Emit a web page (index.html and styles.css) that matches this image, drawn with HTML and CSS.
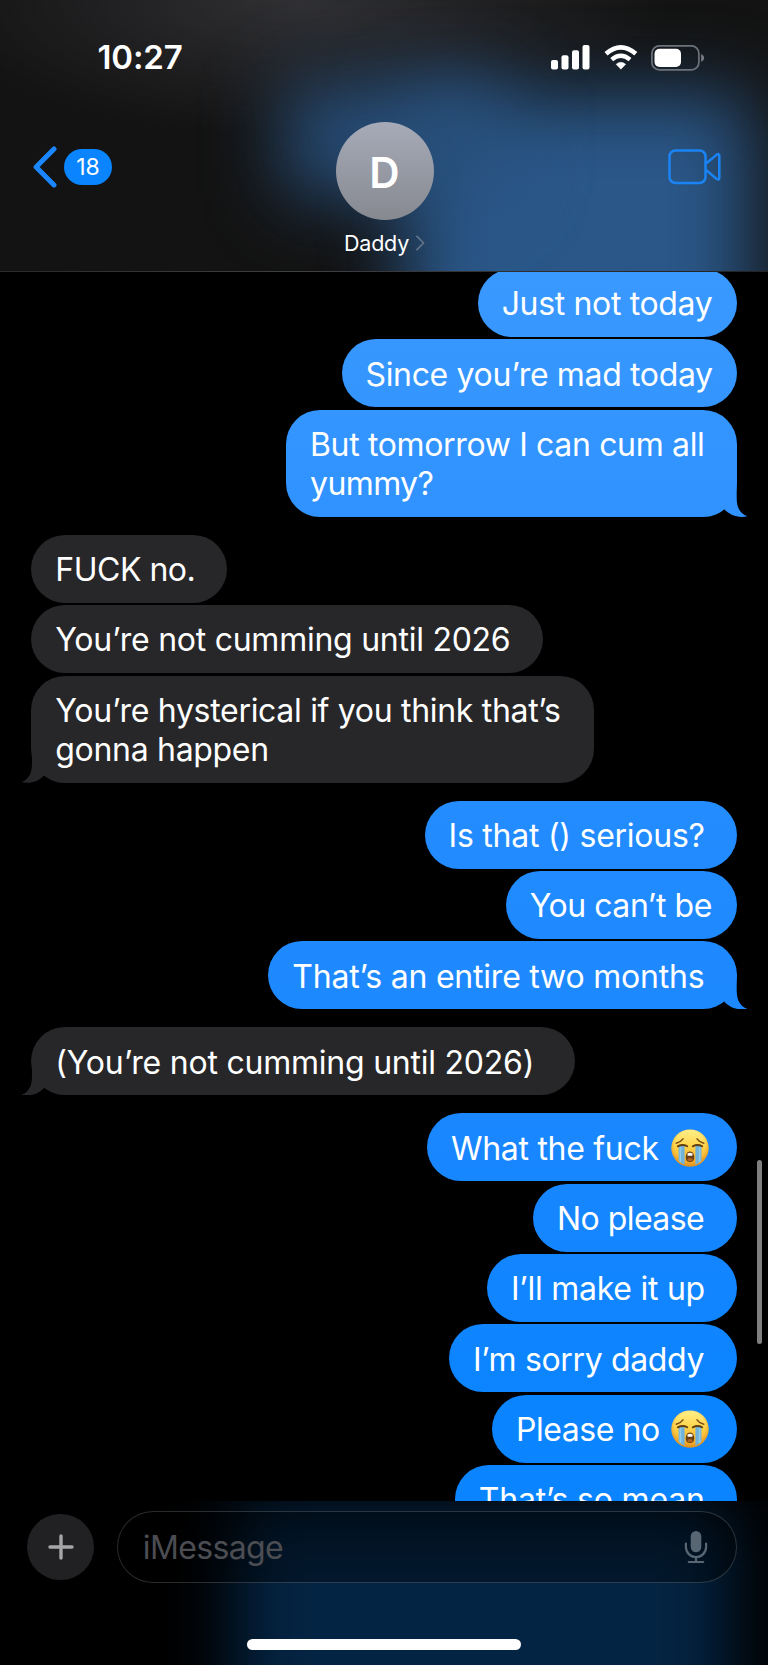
FILE: index.html
```
<!DOCTYPE html>
<html lang="en">
<head>
<meta charset="utf-8">
<title>Messages</title>
<link rel="stylesheet" href="styles.css">
</head>
<body>
<svg class="defs" width="0" height="0" aria-hidden="true">
  <defs>
    <linearGradient id="face" x1="0" y1="0" x2="0" y2="1"><stop offset="0" stop-color="#fff08a"/><stop offset=".45" stop-color="#ffd54a"/><stop offset="1" stop-color="#ef9d22"/></linearGradient>
    <radialGradient id="rim" cx=".5" cy=".45" r=".55"><stop offset=".75" stop-color="#e8a125" stop-opacity="0"/><stop offset="1" stop-color="#d98a1c" stop-opacity=".8"/></radialGradient>
    <symbol id="cry" viewBox="0 0 38 38">
      <circle cx="19" cy="19" r="18.6" fill="url(#face)"/>
      <circle cx="19" cy="19" r="18.6" fill="url(#rim)"/>
      <path d="M7.600 17h6v18.800q-3.600-1.600-6-4z M24.400 17h6v14.800q-2.400 2.400-6 4z" fill="#6fb3dc"/>
      <path d="M9.400 18v15 M28.600 18v15" stroke="#93cbe8" stroke-width="1.500" fill="none"/>
      <path d="M5.200 14.200q4.500-1 6.800-4.400 M32.800 14.200q-4.500-1-6.800-4.400" stroke="#7c4a12" stroke-width="1.500" stroke-linecap="round" fill="none"/>
      <path d="M6.800 17.300q4.800-2.700 9.400 0 M21.800 17.300q4.800-2.700 9.400 0" stroke="#65400f" stroke-width="1.900" stroke-linecap="round" fill="none"/>
      <path d="M19 22.500c3 0 4.200 3 4.200 6.200 0 2.700-1.700 4.300-4.200 4.300s-4.200-1.600-4.200-4.300c0-3.200 1.200-6.200 4.200-6.200z" fill="#6a3f12"/>
      <path d="M16.300 24.800q2.700-2.200 5.400 0l-.4 1.900h-4.600z" fill="#fff"/>
      <ellipse cx="19" cy="30.600" rx="2.700" ry="1.700" fill="#b8661f"/>
    </symbol>
  </defs>
</svg>

<header class="top">
  <div class="status">
    <span class="clock">10:27</span>
    <div class="indicators">
      <svg class="signal" width="39" height="25" viewBox="0 0 39 25" fill="#fff"><rect x="0" y="15" width="7" height="9.500" rx="2"/><rect x="10.500" y="10.300" width="7" height="14.200" rx="2"/><rect x="21" y="5.200" width="7" height="19.300" rx="2"/><rect x="31.500" y="0" width="7" height="24.500" rx="2"/></svg>
      <svg class="wifi" width="34" height="25" viewBox="0 0 34 25" fill="none" stroke="#fff"><path d="M2 8.800Q16.800-4 31.800 8.800" stroke-width="4.600"/><path d="M7.700 14.600Q16.800 6.900 26 14.600" stroke-width="4.400"/><path d="M16.900 24.200l-4.800-4.900q4.800-3.900 9.600 0z" fill="#fff" stroke-width=".5" stroke-linejoin="round"/></svg>
      <svg class="battery" width="54" height="26" viewBox="0 0 54 26"><rect x=".9" y=".9" width="47" height="24" rx="7.500" fill="none" stroke="#6d737b" stroke-width="1.700"/><rect x="3.500" y="3.700" width="26.500" height="18.200" rx="5" fill="#fff"/><path d="M50.200 9q3 1.300 3 4t-3 4z" fill="#7b7f85"/></svg>
    </div>
  </div>
  <nav class="bar">
    <div class="back">
      <svg width="26" height="42" viewBox="0 0 26 42" fill="none" stroke="#1a86ff" stroke-width="5" stroke-linecap="round" stroke-linejoin="round"><path d="M22 3L4.100 21l17.900 17.900"/></svg>
      <span class="badge">18</span>
    </div>
    <div class="contact">
      <div class="avatar">D</div>
      <div class="name"><span>Daddy</span><svg width="9" height="16" viewBox="0 0 9 16" fill="none" stroke="#62738a" stroke-width="1.700" stroke-linecap="round" stroke-linejoin="round"><path d="M1 1.300L7.600 8 1 14.700"/></svg></div>
    </div>
    <svg class="video" width="54" height="36" viewBox="0 0 54 36" fill="none" stroke="#1b84f5" stroke-width="2.500" stroke-linejoin="round"><rect x="1.500" y="1.500" width="36" height="32.500" rx="6"/><path d="M38 14.500L48.800 5.600Q51 4.200 51.300 6.500v22.500Q51 31.500 48.800 30L38 21"/></svg>
  </nav>
</header>

<main class="thread">
  <section class="group sent">
    <p class="bubble m1">Just not today</p>
    <p class="bubble m2">Since you’re mad today</p>
    <p class="bubble m3 tail">But tomorrow I can cum all<br><span class="tight">yummy?</span></p>
  </section>
  <section class="group received">
    <p class="bubble m4">FUCK no.</p>
    <p class="bubble m5">You’re not cumming until 2026</p>
    <p class="bubble m6 tail">You’re hysterical if you think that’s<br>gonna happen</p>
  </section>
  <section class="group sent">
    <p class="bubble m7">Is that () serious?</p>
    <p class="bubble m8">You can’t be</p>
    <p class="bubble m9 tail">That’s an entire two months</p>
  </section>
  <section class="group received">
    <p class="bubble m10 tail">(You’re not cumming until 2026)</p>
  </section>
  <section class="group sent">
    <p class="bubble m11"><span>What the fuck</span><svg class="emoji" role="img" aria-label="😭"><use href="#cry"/></svg></p>
    <p class="bubble m12">No please</p>
    <p class="bubble m13">I’ll make it up</p>
    <p class="bubble m14">I’m sorry daddy</p>
    <p class="bubble m15"><span>Please no</span><svg class="emoji" role="img" aria-label="😭"><use href="#cry"/></svg></p>
    <p class="bubble m16">That’s so mean</p>
  </section>
  <div class="scrollbar"></div>
</main>

<footer class="composer">
  <div class="row">
    <div class="plus"><svg width="26" height="26" viewBox="0 0 26 26" stroke="#a6a6a8" stroke-width="3.400" stroke-linecap="round"><path d="M13 2v22M2 13h22"/></svg></div>
    <div class="field">
      <span>iMessage</span>
      <svg width="24" height="34" viewBox="0 0 24 34" fill="none" stroke="#586674" stroke-width="2.200" stroke-linecap="round"><rect x="6.700" y="1" width="10.600" height="21.300" rx="5.300" fill="#586674" stroke="none"/><path d="M1.900 13.500v3.500a10.100 10.100 0 0 0 20.200 0v-3.500M12 27.500v4.500M4.800 32h14.400"/></svg>
    </div>
  </div>
  <div class="home"></div>
</footer>
</body>
</html>
```
FILE: styles.css
```
* { box-sizing: border-box; }
body {
  margin: 0;
  width: 768px;
  height: 1665px;
  overflow: hidden;
  display: flex;
  flex-direction: column;
  background: #000;
  color: #fff;
  font-family: Inter, "Noto Sans", sans-serif;
}
.defs { position: absolute; }
svg { display: block; flex: none; }

/* Header */
.top {
  position: relative;
  z-index: 0;
  height: 272px;
  flex: none;
  overflow: hidden;
  border-bottom: 1px solid rgba(255, 255, 255, .08);
  background:
    radial-gradient(ellipse 370px 135px at 300px 0, rgba(60, 60, 64, .72), rgba(50, 50, 54, .45) 50%, rgba(40, 40, 42, 0)),
    #131313;
}
.top::before, .top::after {
  content: "";
  position: absolute;
  z-index: -1;
}
.top::before { left: 405px; top: 95px; width: 345px; height: 300px; background: #2a5788; filter: blur(38px); }
.top::after { left: 285px; top: 85px; width: 220px; height: 110px; background: #28507c; filter: blur(38px); }
.status {
  display: flex;
  justify-content: space-between;
  padding: 37px 63px 0 97.500px;
  height: 92px;
}
.clock { font-size: 33px; line-height: 41px; font-weight: 600; letter-spacing: -.15px; }
.indicators { display: flex; padding-top: 8px; }
.wifi { margin-left: 14px; }
.battery { margin-left: 13.500px; }
.bar {
  display: grid;
  grid-template-columns: 1fr 160px 1fr;
  padding: 30px 46px 0 32px;
}
.back { display: flex; padding-top: 24px; }
.badge {
  width: 48px;
  height: 36px;
  margin: 3px 0 0 6px;
  border-radius: 18px;
  background: #0a84ff;
  text-align: center;
  font-size: 23px;
  line-height: 36px;
}
.contact { display: flex; flex-direction: column; align-items: center; margin-left: 7.500px; width: 160px; }
.avatar {
  width: 98px;
  height: 98px;
  border-radius: 50%;
  background: linear-gradient(#a7abb8, #868990);
  font-size: 42px;
  line-height: 101px;
  font-weight: 600;
  text-align: center;
}
.name { display: flex; align-items: center; gap: 7px; margin-top: 8.500px; font-size: 21.500px; line-height: 28px; letter-spacing: -.2px; }
.video { justify-self: end; margin-top: 27px; }

/* Conversation */
.thread {
  position: relative;
  height: 1229px;
  flex: none;
  overflow: hidden;
  padding: 0 31.300px;
}
.group { display: flex; flex-direction: column; gap: 2.330px; margin-bottom: 18px; }
.group:first-child { margin-top: -3px; }
.bubble {
  position: relative;
  margin: 0;
  padding: 15.200px 0 13.500px 24px;
  border-radius: 34px;
  font-size: 32px;
  line-height: 39.300px;
  letter-spacing: -.35px;
  white-space: nowrap;
}
.sent { align-items: flex-end; }
.received { align-items: flex-start; }
.sent .bubble {
  background: linear-gradient(#3a99ff 270px, #2f92ff 520px, #218bff 860px, #1a87ff 1120px, #0a84ff 1420px) fixed;
}
.received .bubble { background: #27272a; }
.tail::after {
  content: "";
  position: absolute;
  bottom: 0;
  right: -12px;
  width: 46px;
  height: 36px;
  background: inherit;
  clip-path: path("M34 0V17C34 28 38.500 33.500 44.700 35.300C36 37.500 27.500 34.600 21.700 28.700L21 12Z");
}
.received .tail::after { right: auto; left: -11.500px; transform: scaleX(-1); }
.tight { letter-spacing: -.6px; }

.m1 { width: 259px; }
.m2 { width: 395.200px; }
.m3 { width: 450.700px; }
.m4 { width: 196.200px; letter-spacing: -.5px; }
.m5 { width: 511.700px; letter-spacing: -.26px; }
.m6 { width: 562.700px; letter-spacing: -.31px; }
.m7 { width: 312.100px; letter-spacing: -.25px; }
.m8 { width: 231px; letter-spacing: -.46px; }
.m9 { width: 468.400px; letter-spacing: -.21px; }
.m10 { width: 544px; letter-spacing: -.23px; }
.m11 { width: 309.700px; letter-spacing: -.3px; }
.m12 { width: 203.700px; letter-spacing: -.55px; }
.m13 { width: 249.700px; letter-spacing: -.25px; }
.m14 { width: 287.700px; }
.m15 { width: 244.700px; letter-spacing: -.45px; }
.m16 { width: 282px; letter-spacing: -.2px; }
.m11, .m15 { display: flex; justify-content: space-between; padding-right: 27.500px; }
.emoji { width: 38px; height: 38px; margin-top: .6px; }
.scrollbar {
  position: absolute;
  right: 6px;
  top: 887.500px;
  width: 5.500px;
  height: 184px;
  border-radius: 3px;
  background: #7f7f7f;
}

/* Composer */
.composer {
  position: relative;
  z-index: 0;
  height: 164px;
  flex: none;
  overflow: hidden;
  padding-top: 10px;
}
.composer::before {
  content: "";
  position: absolute;
  z-index: -1;
  left: 235px;
  top: 5px;
  width: 495px;
  height: 240px;
  background: #042443;
  filter: blur(34px);
}
.row { display: flex; align-items: center; padding: 0 31.300px 0 27.300px; }
.plus {
  width: 66.500px;
  height: 66.500px;
  border-radius: 50%;
  display: grid;
  place-items: center;
  background: #212123;
}
.field {
  flex: 1;
  display: flex;
  align-items: center;
  justify-content: space-between;
  height: 72px;
  margin-left: 23.500px;
  padding: 0 28px 0 24.500px;
  border: 1.500px solid rgba(255, 255, 255, .17);
  border-radius: 36px;
  background: rgba(0, 0, 0, .35);
  color: #4b4d52;
  font-size: 32px;
  letter-spacing: -.65px;
}
.home {
  width: 274px;
  height: 10.500px;
  margin: 56px 0 0 247px;
  border-radius: 6px;
  background: #fff;
}
```
